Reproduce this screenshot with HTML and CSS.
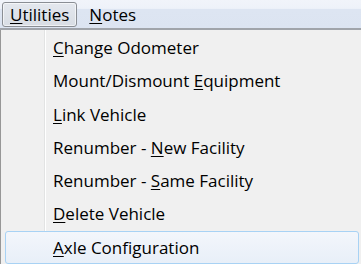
FILE: index.html
```html
<!DOCTYPE html>
<html lang="en">
  <head>
    <meta charset="UTF-8" />
    <title>Utilities Menu</title>
    <link rel="stylesheet" href="styles.css">
  </head>
  <body>
    <!-- Menu Bar -->
    <div class="menubar">
      <span class="menubar-item open"><u>U</u>tilities</span>
      <span class="menubar-item"><u>N</u>otes</span>
    </div>

    <!-- Dropdown -->
    <div class="dropdown">
      <div class="menu-item"><u>C</u>hange Odometer</div>
      <div class="menu-item">Mount/Dismount <u>E</u>quipment</div>
      <div class="menu-item"><u>L</u>ink Vehicle</div>
      <div class="menu-item">Renumber - <u>N</u>ew Facility</div>
      <div class="menu-item">Renumber - <u>S</u>ame Facility</div>
      <div class="menu-item"><u>D</u>elete Vehicle</div>
      <div class="menu-item active"><u>A</u>xle Configuration</div>
    </div>
  </body>
</html>
```

FILE: styles.css
```css
* {
  box-sizing: border-box;
  margin: 0;
  padding: 0;
}
body {
  font-family: "Open Sans", sans-serif;
  font-size: 17px;
  color: #000;
  background: #f0f0f0;
  width: 361px;
  height: 264px;
  overflow: hidden;
}
u {
  text-decoration: underline;
  text-underline-offset: 2px;
}
.menubar {
  height: 30px;
  display: flex;
  align-items: center;
  gap: 4px;
  padding: 0 2px;
  background: linear-gradient(#f1f4fa 0, #eef2f9 30%, #dde5f2 33%, #dce4f1 100%);
  border-bottom: 2px solid #a0a4aa;
}
.menubar-item {
  height: 25px;
  line-height: 23px;
  padding: 0 7px;
  border: 1px solid transparent;
  border-radius: 3px;
}
.menubar-item.open {
  border-color: #8a8e94;
  background: linear-gradient(#e4e8ee, #d8dde4);
  box-shadow: inset 0 0 0 1px rgba(255, 255, 255, 0.6);
}
.dropdown {
  height: 234px;
  border-left: 1px solid #979797;
  background: linear-gradient(to right, #f0f0f0 0, #f0f0f0 43px, #e2e3e3 43px, #e2e3e3 44px, #fff 44px, #fff 45px, #f0f0f0 45px);
  padding-top: 1px;
}
.menu-item {
  height: 33.3px;
  line-height: 31px;
  padding-left: 47px;
  margin: 0 2px 0 4px;
  border: 1px solid transparent;
  border-radius: 3px;
}
.menu-item.active {
  border-color: #a8d2f4;
  background: linear-gradient(#f3f6fb, #e8eff8);
}
```
